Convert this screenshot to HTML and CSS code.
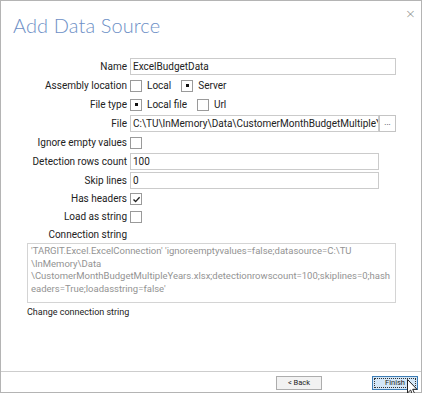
FILE: index.html
```html
<!DOCTYPE html>
<html>
<head>
<meta charset="utf-8">
<link rel="stylesheet" href="styles.css">
</head>
<body>
<div class="window">
  <div class="header">
    <h1 class="title">Add Data Source</h1>
    <span class="close">×</span>
  </div>
  <div class="form">
    <label class="lbl">Name</label>
    <div class="ctl"><div class="input wide">ExcelBudgetData</div></div>

    <label class="lbl">Assembly location</label>
    <div class="ctl opts"><span class="box"></span><span class="opt">Local</span><span class="box dot"></span><span class="opt">Server</span></div>

    <label class="lbl">File type</label>
    <div class="ctl opts"><span class="box dot"></span><span class="opt">Local file</span><span class="box"></span><span class="opt">Url</span></div>

    <label class="lbl">File</label>
    <div class="ctl file"><div class="input mid clip">C:\TU\InMemory\Data\CustomerMonthBudgetMultipleYears.xlsx</div><span class="browse">...</span></div>

    <label class="lbl">Ignore empty values</label>
    <div class="ctl opts"><span class="box"></span></div>

    <label class="lbl">Detection rows count</label>
    <div class="ctl"><div class="input mid">100</div></div>

    <label class="lbl">Skip lines</label>
    <div class="ctl"><div class="input mid">0</div></div>

    <label class="lbl short">Has headers</label>
    <div class="ctl short opts"><span class="box"><svg width="9" height="9" viewBox="0 0 9 9"><path d="M1.5 4.5 L3.6 6.6 L7.6 2.2" fill="none" stroke="#222" stroke-width="1.4"/></svg></span></div>

    <label class="lbl short">Load as string</label>
    <div class="ctl short opts"><span class="box"></span></div>

    <label class="lbl conn">Connection string</label>
    <div class="ctl conn"></div>
  </div>
  <div class="connbox">'TARGIT.Excel.ExcelConnection' 'ignoreemptyvalues=false;datasource=C:\TU<br>\InMemory\Data<br>\CustomerMonthBudgetMultipleYears.xlsx;detectionrowscount=100;skiplines=0;hash<br>eaders=True;loadasstring=false'</div>
  <div class="change">Change connection string</div>
  <div class="spacer"></div>
  <div class="footer">
    <span class="btn">&lt; Back</span>
    <span class="btn primary"><span class="focus">Finish</span>
      <svg class="cursor" width="12" height="18" viewBox="0 0 12 18"><path d="M0.5 0.5 L0.5 14 L3.6 11 L6 16.5 L8 15.6 L5.7 10.3 L10 10.3 Z" fill="#fff" stroke="#222" stroke-width="1"/></svg>
    </span>
  </div>
</div>
</body>
</html>
```

FILE: styles.css
```css
* { box-sizing: border-box; }
html, body { margin: 0; padding: 0; background: #fff; }
body {
  font-family: "Roboto", "Noto Sans", sans-serif;
  font-size: 10px;
  color: #222;
  width: 423px;
  height: 393px;
  overflow: hidden;
}
.window {
  width: 422px;
  height: 393px;
  border: 1px solid #b4b4b4;
  display: flex;
  flex-direction: column;
  background: #fff;
}
.header {
  display: flex;
  justify-content: space-between;
  align-items: flex-start;
  height: 56px;
  padding: 0 0 0 12px;
}
.title {
  margin: 12px 0 0 0;
  font-family: "Lato", "Noto Sans", sans-serif;
  font-weight: 300;
  font-size: 20px;
  line-height: 24px;
  color: #6d8fc6;
  letter-spacing: 0.1px;
}
.close {
  margin: 5px 5px 0 0;
  font-size: 13px;
  color: #888;
  font-family: "DejaVu Sans", sans-serif;
  font-weight: 300;
}
.form {
  display: grid;
  grid-template-columns: 126px 266px;
  column-gap: 3px;
}
.lbl {
  text-align: right;
  white-space: nowrap;
  height: 19px;
  line-height: 19px;
}
.ctl {
  height: 19px;
  display: flex;
  align-items: center;
}
.lbl.short, .ctl.short { height: 18px; line-height: 18px; }
.lbl.conn, .ctl.conn { height: 17px; line-height: 17px; }
.input {
  height: 17px;
  border: 1px solid #cbcbcb;
  padding: 0 2px;
  line-height: 15px;
  white-space: nowrap;
  overflow: hidden;
}
.wide { width: 266px; }
.mid { width: 249px; flex: none; }
.clip { text-overflow: clip; }
.browse {
  width: 17px;
  height: 17px;
  flex: none;
  border: 1px solid #c4c4c4;
  font-size: 8px;
  line-height: 13px;
  text-align: center;
  color: #333;
}
.box {
  width: 12px;
  height: 12px;
  border: 1px solid #9a9a9a;
  background: #fff;
  display: inline-flex;
  align-items: center;
  justify-content: center;
  flex: none;
}
.box.dot::after {
  content: "";
  width: 3px;
  height: 3px;
  background: #111;
}
.opt {
  margin: 0 10px 0 5px;
}
.connbox {
  margin: 0 0 0 26px;
  width: 369px;
  height: 60px;
  border: 1px solid #d4d4d4;
  color: #939393;
  padding: 1px 0 0 3px;
  line-height: 12.6px;
  white-space: nowrap;
  overflow: hidden;
  font-size: 9.5px;
}
.change {
  margin: 2px 0 0 26px;
  font-size: 9px;
  line-height: 14px;
}
.spacer { flex: 1; }
.footer {
  height: 21px;
  border-top: 1px solid #cdcdcd;
  display: flex;
  justify-content: flex-end;
  align-items: center;
  gap: 50px;
  padding: 1px 3px 0 0;
}
.btn {
  display: block;
  width: 46px;
  height: 14px;
  flex: none;
  border: 1px solid #adadad;
  background: #f2f2f2;
  font-size: 7.5px;
  line-height: 12px;
  text-align: center;
  color: #222;
  position: relative;
}
.btn.primary {
  background: #d4e7f7;
  border-color: #3d7db5;
  padding: 1px;
}
.focus {
  display: block;
  height: 10px;
  line-height: 8px;
  border: 1px dotted #333;
}
.cursor {
  position: absolute;
  left: 34px;
  top: 2px;
}
```
